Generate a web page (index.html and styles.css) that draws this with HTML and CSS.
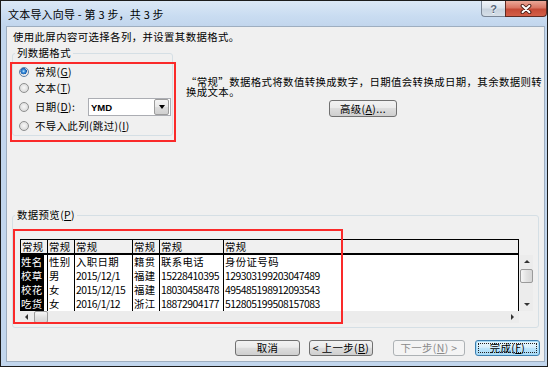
FILE: index.html
```html
<!DOCTYPE html>
<html lang="zh-CN">
<head>
<meta charset="utf-8">
<title>文本导入向导</title>
<link rel="stylesheet" href="styles.css">
</head>
<body>
<div class="window">
  <div class="titlebar">
    <div class="title">文本导入向导 - 第 3 步，共 3 步</div>
    <div class="caption">
      <div class="cbtn help">?</div>
      <div class="cbtn close">
        <svg width="14" height="10" viewBox="0 0 14 10"><path d="M3.5 1.8 L10.5 8.2 M10.5 1.8 L3.5 8.2" stroke="#4a1d16" stroke-width="3.8" stroke-linecap="round"/><path d="M3.5 1.8 L10.5 8.2 M10.5 1.8 L3.5 8.2" stroke="#fff" stroke-width="2" stroke-linecap="round"/></svg>
      </div>
    </div>
  </div>
  <div class="client">
    <p class="intro">使用此屏内容可选择各列，并设置其数据格式。</p>
    <div class="top">
      <fieldset class="group fmt">
        <legend>列数据格式</legend>
        <div class="radios">
          <div class="radio r1"><span class="rb on"></span><span>常规(<u>G</u>)</span></div>
          <div class="radio r2"><span class="rb"></span><span>文本(<u>T</u>)</span></div>
          <div class="radio r3"><span class="rb"></span><span class="date-label">日期(<u>D</u>):</span><div class="combo"><span class="combo-val">YMD</span><span class="combo-btn"><i class="tri-down"></i></span></div></div>
          <div class="radio r4"><span class="rb"></span><span>不导入此列(跳过)(<u>I</u>)</span></div>
        </div>
      </fieldset>
      <div class="desc">
        <p>“常规”数据格式将数值转换成数字，日期值会转换成日期，其余数据则转换成文本。</p>
        <button class="btn adv">高级(<u>A</u>)...</button>
      </div>
    </div>
    <fieldset class="group preview">
      <legend>数据预览(<u>P</u>)</legend>
      <div class="pv-body">
        <div class="tbl-wrap">
          <div class="tbl">
            <div class="hdr">
              <span>常规</span><span>常规</span><span>常规</span><span>常规</span><span>常规</span><span>常规</span>
            </div>
            <div class="rows">
              <div class="col c1"><div class="sel"><span>姓名</span><span>校草</span><span>校花</span><span>吃货</span></div></div>
              <div class="col"><span>性别</span><span>男</span><span>女</span><span>女</span></div>
              <div class="col"><span>入职日期</span><span class="num">2015/12/1</span><span class="num">2015/12/15</span><span class="num">2016/1/12</span></div>
              <div class="col"><span>籍贯</span><span>福建</span><span>福建</span><span>浙江</span></div>
              <div class="col"><span>联系电话</span><span class="num">15228410395</span><span class="num">18030458478</span><span class="num">18872904177</span></div>
              <div class="col"><span>身份证号码</span><span class="num">129303199203047489</span><span class="num">495485198912093543</span><span class="num">512805199508157083</span></div>
            </div>
          </div>
          <div class="hscroll">
            <span class="sb-btn"><i class="tri-left"></i></span>
            <span class="thumb-h"></span>
            <span class="track"></span>
            <span class="sb-btn"><i class="tri-right"></i></span>
          </div>
        </div>
        <div class="vscroll">
          <span class="sb-btn v"><i class="tri-up"></i></span>
          <span class="thumb-v"></span>
          <span class="track"></span>
          <span class="sb-btn v"><i class="tri-down small"></i></span>
        </div>
      </div>
    </fieldset>
    <div class="buttons">
      <button class="btn b-cancel">取消</button>
      <button class="btn b-prev">&lt; 上一步(<u>B</u>)</button>
      <button class="btn b-next" disabled>下一步(<u>N</u>) &gt;</button>
      <button class="btn b-finish"><span class="focus">完成(<u>F</u>)</span></button>
    </div>
  </div>
</div>
<div class="anno a1"></div>
<div class="anno a2"></div>
</body>
</html>
```

FILE: styles.css
```css
* { box-sizing: border-box; }
html, body { margin: 0; padding: 0; background: #fff; }
body {
  font-family: "Noto Sans CJK SC", "Noto Sans CJK JP", sans-serif;
  font-size: 10.4px;
  line-height: 12px;
  letter-spacing: 0.4px;
  color: #000;
}
u { text-decoration: underline; text-underline-offset: 1px; }

.window {
  width: 548px;
  height: 367px;
  border: 1px solid #1c1c1c;
  background: #c2d6ed;
  display: flex;
  flex-direction: column;
}
.titlebar {
  height: 25px;
  flex: none;
  display: flex;
  align-items: flex-start;
  background: linear-gradient(#dbe8f6, #c9dcf1 60%, #c2d6ed);
}
.title { font-size: 11px; line-height: 12px; letter-spacing: 0.2px; margin: 7px 0 0 7px; }
.caption { margin-left: auto; display: flex; }
.cbtn { height: 16px; display: flex; align-items: center; justify-content: center; }
.help {
  width: 24px;
  border: 1px solid #7a8696;
  border-top: 0;
  border-right: 0;
  border-radius: 0 0 0 4px;
  background: linear-gradient(#f1f5fa, #dbe3ec 45%, #c7d2de 55%, #d6dfe8);
  font: bold 11px "Liberation Sans", sans-serif;
  letter-spacing: 0;
  color: #56657a;
  text-shadow: 0 1px 0 #fff;
}
.close {
  width: 42px;
  border: 1px solid #5e2a22;
  border-top: 0;
  border-radius: 0 0 4px 0;
  background: linear-gradient(#eaa898, #d97563 45%, #c54a36 55%, #d35f48);
}

.client {
  flex: 1;
  margin: 0 2px 4px 5px;
  border: 1px solid #9eaec0;
  background: #f0f0f0;
  display: flex;
  flex-direction: column;
}
.intro { margin: 4px 0 0 6px; line-height: 12px; }

.top { display: flex; align-items: flex-start; margin-top: 4px; }
.group {
  margin: 0;
  padding: 0;
  border: 1px solid #d5dfe5;
  border-radius: 3px;
  min-width: 0;
}
.group legend { margin-left: 2px; padding: 0 2px; line-height: 12px; }
.fmt { margin-left: 5px; width: 161px; flex: none; }
.radios { padding: 6px 0 2px 6px; }
.radio { display: flex; align-items: center; height: 14px; line-height: 14px; white-space: nowrap; }
.r2 { margin-top: 2px; }
.r3 { margin-top: 3px; height: 18px; }
.r4 { margin-top: 3px; }
.rb {
  width: 10px;
  height: 10px;
  flex: none;
  border-radius: 50%;
  margin-right: 6px;
  border: 1px solid #8e8f8f;
  background: radial-gradient(circle at 50% 45%, #f8f8f8, #dcdcdc 70%, #cfcfcf);
}
.rb.on {
  border-color: #5d7fa6;
  background: radial-gradient(circle at 45% 40%, #c9ecff 0, #3b8fdc 1.5px, #1c5fae 3px, #e6e6e6 3.4px, #f2f2f2);
}
.date-label { width: 53px; }
.combo {
  width: 83px;
  height: 18px;
  border: 1px solid #abadb3;
  background: #fff;
  display: flex;
  align-items: center;
}
.combo-val { flex: 1; margin-left: 2px; font: bold 9.5px "Liberation Sans", sans-serif; letter-spacing: 0; }
.combo-btn {
  width: 15px;
  height: 16px;
  margin-right: 1px;
  border: 1px solid #9c9c9c;
  border-radius: 2px;
  background: linear-gradient(#f4f4f4, #e9e9e9 48%, #dcdcdc 52%, #d0d0d0);
  display: flex;
  align-items: center;
  justify-content: center;
}
.tri-down { width: 0; height: 0; border-left: 3.5px solid transparent; border-right: 3.5px solid transparent; border-top: 4px solid #000; }
.tri-down.small { border-left-width: 3px; border-right-width: 3px; border-top-width: 3px; border-top-color: #333; }
.tri-up { width: 0; height: 0; border-left: 3px solid transparent; border-right: 3px solid transparent; border-bottom: 3px solid #333; }
.tri-left { width: 0; height: 0; border-top: 3px solid transparent; border-bottom: 3px solid transparent; border-right: 3px solid #333; }
.tri-right { width: 0; height: 0; border-top: 3px solid transparent; border-bottom: 3px solid transparent; border-left: 3px solid #333; }

.desc { margin: 30px 0 0 13px; width: 358px; }
.desc p { margin: 0; line-height: 10px; }

.btn {
  font-family: inherit;
  font-size: 10.4px;
  line-height: 12px;
  letter-spacing: 0.4px;
  height: 16px;
  padding: 0;
  border: 1px solid #707070;
  border-radius: 3px;
  background: linear-gradient(#f2f2f2, #ebebeb 45%, #dddddd 50%, #cfcfcf);
  color: #000;
  display: flex;
  align-items: center;
  justify-content: center;
  white-space: nowrap;
}
.adv { margin: 3px 0 0 143px; width: 68px; height: 17px; }

.preview { margin: 73px 5px 0 5px; }
.pv-body { display: flex; align-items: flex-start; padding: 18px 0 4px 7px; }
.tbl-wrap { width: 499px; flex: none; }
.tbl { border-left: 1px solid #000; }
.hdr, .rows { display: grid; grid-template-columns: 27px 27px 58px 27px 64px 1fr; }
.hdr {
  height: 16px;
  border-top: 1px solid #000;
  border-bottom: 2px solid #000;
  background: #f0f0f0;
}
.hdr span { border-right: 1px solid #000; line-height: 13px; padding-left: 1px; }
.rows { height: 56px; background: #fff; }
.col { border-right: 1px solid #000; padding-left: 1px; overflow: hidden; }
.col span { display: block; line-height: 14px; white-space: nowrap; }
.col .num { letter-spacing: -0.5px; }
.c1 { padding-left: 0; }
.c1 .sel { width: 23px; height: 100%; background: #000; color: #fff; }

.hscroll { height: 12px; display: flex; background: #ececec; }
.sb-btn { width: 13px; flex: none; display: flex; align-items: center; justify-content: center; }
.sb-btn.v { height: 13px; width: auto; }
.track { flex: 1; }
.thumb-h {
  width: 14px;
  margin-left: 1px;
  border: 1px solid #9a9a9a;
  border-radius: 2px;
  background: linear-gradient(#f6f6f6, #e2e2e2 50%, #d6d6d6);
}
.vscroll {
  width: 13px;
  height: 56px;
  flex: none;
  margin: 16px 0 0 1px;
  display: flex;
  flex-direction: column;
  background: #ececec;
}
.thumb-v {
  height: 14px;
  margin-top: 1px;
  border: 1px solid #9a9a9a;
  border-radius: 2px;
  background: linear-gradient(to right, #f6f6f6, #e2e2e2 50%, #d6d6d6);
}

.buttons { display: flex; justify-content: flex-end; margin-top: 12px; padding-right: 4px; }
.b-cancel { width: 65px; }
.b-prev { width: 64px; margin-left: 9px; }
.b-next {
  width: 72px;
  margin-left: 20px;
  border-color: #adb2b5;
  background: #f4f4f4;
  color: #8a8a8a;
}
.b-finish {
  width: 65px;
  margin-left: 10px;
  border-color: #3c7fb1;
  box-shadow: inset 0 0 0 1px #a9dcf6;
  background: linear-gradient(#eaf6fd, #d9f0fc 45%, #bee6fd 50%, #a7d9f5);
}
.b-finish .focus {
  display: flex;
  align-items: center;
  justify-content: center;
  width: 59px;
  height: 10px;
  border: 1px dotted #222;
}

.anno { position: absolute; border: 2px solid #fa2a2a; pointer-events: none; }
.a1 { left: 10px; top: 62px; width: 166px; height: 80px; }
.a2 { left: 13px; top: 229px; width: 330px; height: 95px; }
```
